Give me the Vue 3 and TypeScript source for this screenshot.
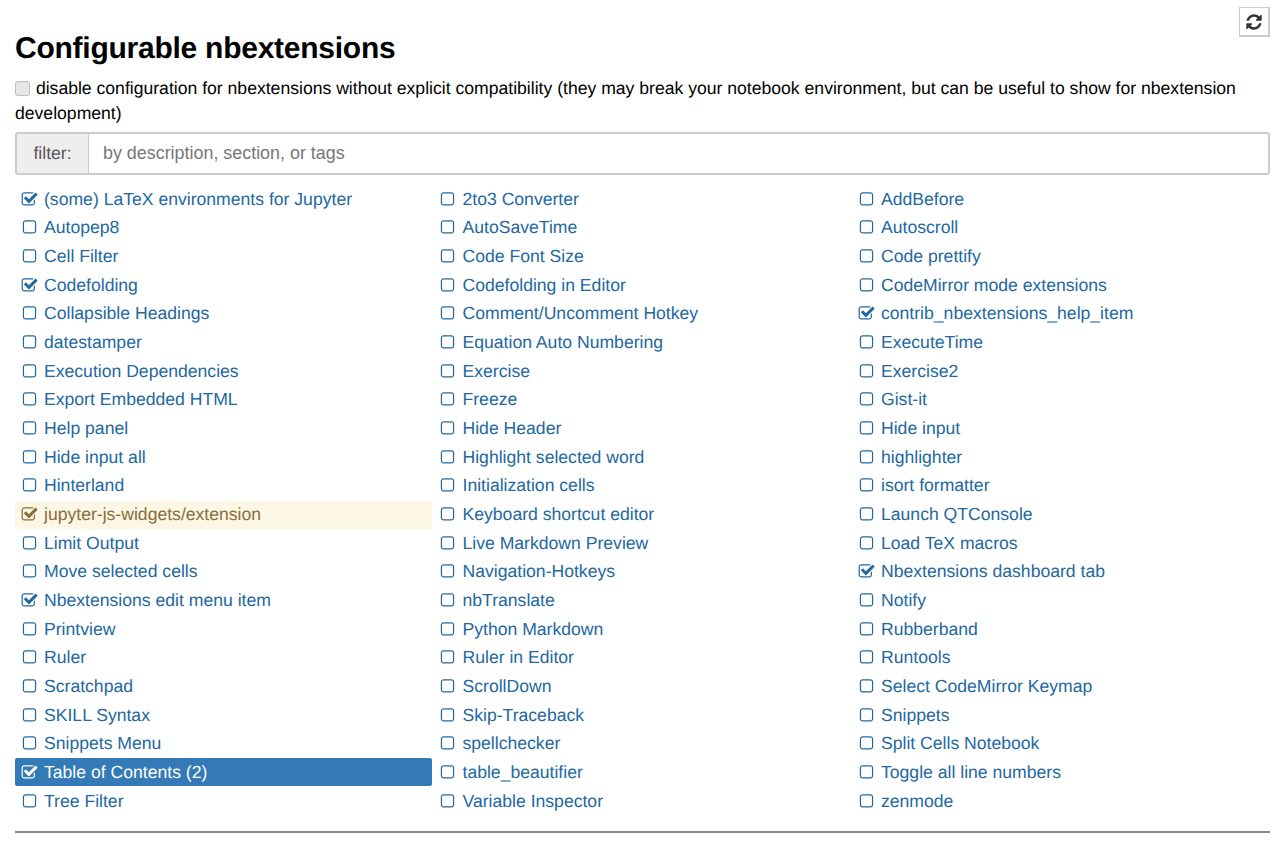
<script setup lang="ts">
interface Extension {
  name: string;
  checked?: boolean;
  state?: "warning" | "active";
}

const extensions: Extension[] = [
  { name: "(some) LaTeX environments for Jupyter", checked: true },
  { name: "2to3 Converter" },
  { name: "AddBefore" },
  { name: "Autopep8" },
  { name: "AutoSaveTime" },
  { name: "Autoscroll" },
  { name: "Cell Filter" },
  { name: "Code Font Size" },
  { name: "Code prettify" },
  { name: "Codefolding", checked: true },
  { name: "Codefolding in Editor" },
  { name: "CodeMirror mode extensions" },
  { name: "Collapsible Headings" },
  { name: "Comment/Uncomment Hotkey" },
  { name: "contrib_nbextensions_help_item", checked: true },
  { name: "datestamper" },
  { name: "Equation Auto Numbering" },
  { name: "ExecuteTime" },
  { name: "Execution Dependencies" },
  { name: "Exercise" },
  { name: "Exercise2" },
  { name: "Export Embedded HTML" },
  { name: "Freeze" },
  { name: "Gist-it" },
  { name: "Help panel" },
  { name: "Hide Header" },
  { name: "Hide input" },
  { name: "Hide input all" },
  { name: "Highlight selected word" },
  { name: "highlighter" },
  { name: "Hinterland" },
  { name: "Initialization cells" },
  { name: "isort formatter" },
  { name: "jupyter-js-widgets/extension", checked: true, state: "warning" },
  { name: "Keyboard shortcut editor" },
  { name: "Launch QTConsole" },
  { name: "Limit Output" },
  { name: "Live Markdown Preview" },
  { name: "Load TeX macros" },
  { name: "Move selected cells" },
  { name: "Navigation-Hotkeys" },
  { name: "Nbextensions dashboard tab", checked: true },
  { name: "Nbextensions edit menu item", checked: true },
  { name: "nbTranslate" },
  { name: "Notify" },
  { name: "Printview" },
  { name: "Python Markdown" },
  { name: "Rubberband" },
  { name: "Ruler" },
  { name: "Ruler in Editor" },
  { name: "Runtools" },
  { name: "Scratchpad" },
  { name: "ScrollDown" },
  { name: "Select CodeMirror Keymap" },
  { name: "SKILL Syntax" },
  { name: "Skip-Traceback" },
  { name: "Snippets" },
  { name: "Snippets Menu" },
  { name: "spellchecker" },
  { name: "Split Cells Notebook" },
  { name: "Table of Contents (2)", checked: true, state: "active" },
  { name: "table_beautifier" },
  { name: "Toggle all line numbers" },
  { name: "Tree Filter" },
  { name: "Variable Inspector" },
  { name: "zenmode" },
];

const squarePath =
  "M1312 256h-832q-66 0-113 47t-47 113v832q0 66 47 113t113 47h832q66 0 113-47t47-113v-832q0-66-47-113t-113-47zm288 160v832q0 119-84.5 203.5t-203.5 84.5h-832q-119 0-203.5-84.5t-84.5-203.5v-832q0-119 84.5-203.5t203.5-84.5h832q119 0 203.5 84.5t84.5 203.5z";
const checkPath =
  "M1472 930v318q0 119-84.5 203.5t-203.5 84.5h-832q-119 0-203.5-84.5t-84.5-203.5v-832q0-119 84.5-203.5t203.5-84.5h832q63 0 117 25 15 7 18 23 3 17-9 29l-49 49q-10 10-23 10-3 0-9-2-23-6-45-6h-832q-66 0-113 47t-47 113v832q0 66 47 113t113 47h832q66 0 113-47t47-113v-254q0-13 9-22l64-64q10-10 23-10 6 0 12 3 20 8 20 29zm231-489l-814 814q-24 24-57 24t-57-24l-430-430q-24-24-24-57t24-57l110-110q24-24 57-24t57 24l263 263 647-647q24-24 57-24t57 24l110 110q24 24 24 57t-24 57z";
const refreshPath =
  "M1639 1056q0 5-1 7-64 268-268 434.5t-478 166.5q-146 0-282.5-55t-243.5-157l-129 129q-19 19-45 19t-45-19-19-45v-448q0-26 19-45t45-19h448q26 0 45 19t19 45-19 45l-137 137q71 66 161 102t187 36q134 0 250-65t186-179q11-17 53-117 8-23 30-23h192q13 0 22.5 9.5t9.5 22.5zm25-800v448q0 26-19 45t-45 19h-448q-26 0-45-19t-19-45 19-45l138-138q-148-137-349-137-134 0-250 65t-186 179q-11 17-53 117-8 23-30 23h-199q-13 0-22.5-9.5t-9.5-22.5v-7q65-268 270-434.5t480-166.5q146 0 284 55.5t245 156.5l130-129q19-19 45-19t45 19 19 45z";
</script>

<template>
  <div class="page">
    <div class="toolbar">
      <button class="refresh" type="button" aria-label="refresh">
        <svg viewBox="0 0 1792 1792" width="18" height="18"><path :d="refreshPath" /></svg>
      </button>
    </div>
    <h3 class="title">Configurable nbextensions</h3>
    <label class="compat">
      <input type="checkbox" class="compat-box" />
      disable configuration for nbextensions without explicit compatibility (they may break your notebook environment, but can be useful to show for nbextension development)
    </label>
    <div class="filter">
      <span class="filter-label">filter:</span>
      <input class="filter-input" type="text" placeholder="by description, section, or tags" />
    </div>
    <ul class="ext-list">
      <li
        v-for="ext in extensions"
        :key="ext.name"
        class="ext-item"
        :class="ext.state"
      >
        <svg class="ext-icon" viewBox="0 0 1792 1792" width="17" height="17">
          <path :d="ext.checked ? checkPath : squarePath" />
        </svg>
        <span>{{ ext.name }}</span>
      </li>
    </ul>
    <hr class="rule" />
  </div>
</template>

<style scoped>
.page {
  padding: 0 10px 0 15px;
  font-family: "Liberation Sans", Arial, sans-serif;
  font-size: 17.6px;
  color: #000;
  text-rendering: geometricPrecision;
}

.toolbar {
  display: flex;
  justify-content: flex-end;
  padding-top: 7px;
}

.refresh {
  display: flex;
  align-items: center;
  justify-content: center;
  width: 31px;
  height: 30px;
  padding: 0;
  background: #fff;
  border: 2px solid #ccc;
  border-width: 1px 2px 2px 1px;
}

.refresh path {
  fill: #333;
}

.title {
  margin: -5px 0 0;
  font-size: 30px;
  letter-spacing: -0.25px;
  line-height: 33px;
  font-weight: 700;
}

.compat {
  display: block;
  margin-top: 11px;
  line-height: 25px;
}

.compat-box {
  appearance: none;
  box-sizing: border-box;
  width: 15px;
  height: 15px;
  margin: 0 1px 0 0;
  vertical-align: -2px;
  background: #e6e6e6;
  border: 1px solid #bdbdbd;
  border-radius: 3px;
}

.filter {
  display: flex;
  height: 43px;
  margin-top: 6px;
  box-sizing: border-box;
  border: 2px solid #ccc;
  border-radius: 3px;
}

.filter-label {
  display: flex;
  align-items: center;
  justify-content: center;
  width: 71px;
  flex: none;
  background: #eee;
  border-right: 1px solid #ccc;
  color: #555;
}

.filter-input {
  flex: 1;
  min-width: 0;
  padding: 0 14px;
  border: none;
  outline: none;
  font: inherit;
  font-size: 17.9px;
  color: #555;
}

.filter-input::placeholder {
  color: #777;
  opacity: 1;
}

.ext-list {
  display: grid;
  grid-template-columns: repeat(3, 1fr);
  grid-auto-rows: 28px;
  row-gap: 0.67px;
  column-gap: 1.5px;
  margin: 10.3px 0 0;
  padding: 0 1px 0 0;
  list-style: none;
}

.ext-item {
  display: flex;
  align-items: center;
  gap: 6.5px;
  padding-left: 5.5px;
  border-radius: 2px;
  color: #23689f;
  white-space: nowrap;
}

.ext-icon {
  flex: none;
}

.ext-icon path {
  fill: currentColor;
}

.ext-item.warning {
  background: #fcf6e4;
  color: #8a6d3b;
}

.ext-item.active {
  background: #337ab7;
  color: #fff;
}

.rule {
  height: 0;
  margin: 15.5px 0 0;
  border: none;
  border-top: 2px solid #888;
}
</style>
